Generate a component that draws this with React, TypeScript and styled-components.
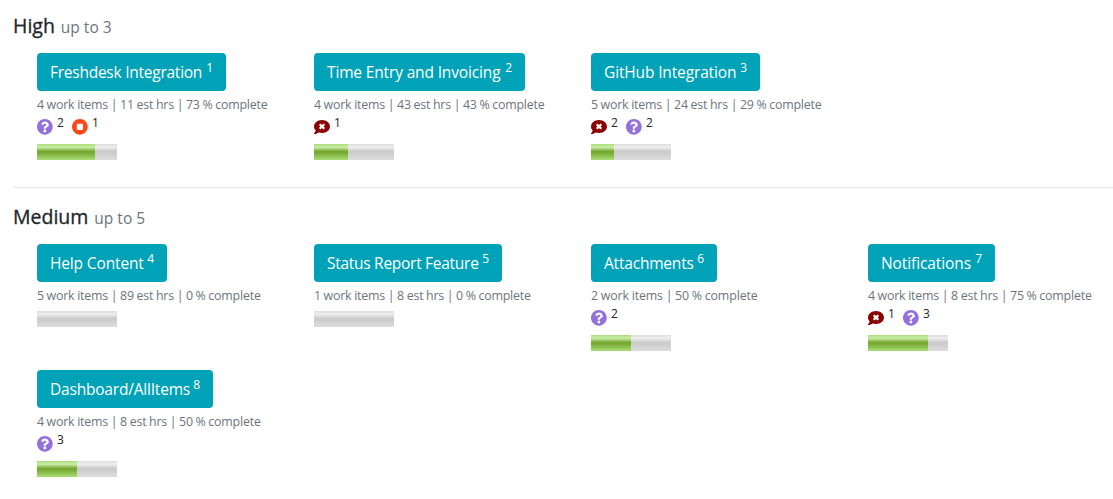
import React from "react";
import styled, { createGlobalStyle } from "styled-components";

const GlobalStyle = createGlobalStyle`
  *, *::before, *::after { box-sizing: border-box; }
  html { overflow: hidden; }
  body {
    margin: 0;
    background: #fff;
    color: #212529;
    font-family: "Open Sans", "Noto Sans", sans-serif;
    font-size: 15.5px;
    line-height: 24px;
  }
`;

const Page = styled.main`
  width: 1113px;
  height: 499px;
  padding: 14px 0 0 13px;
  overflow: hidden;
`;

const Section = styled.section`
  & + & {
    margin-top: 27px;
    padding-top: 17px;
    border-top: 1px solid #e5e5e5;
  }
`;

const Heading = styled.h5`
  display: flex;
  align-items: baseline;
  gap: 6px;
  height: 24px;
  margin: 0 0 15px;
  font-size: 19.5px;
  font-weight: 500;
  line-height: 24px;
  -webkit-text-stroke: 0.3px #212529;
`;

const Limit = styled.small`
  color: #6c757d;
  font-size: 15.5px;
  font-weight: 400;
  -webkit-text-stroke: 0;
`;

const Grid = styled.div`
  display: grid;
  grid-template-columns: repeat(4, 277px);
  row-gap: 19px;
  padding-left: 24px;
`;

const Card = styled.article`
  display: flex;
  flex-direction: column;
  align-items: flex-start;
  white-space: nowrap;
`;

const FeatureButton = styled.button<{ $width: number }>`
  display: flex;
  justify-content: space-between;
  width: ${(p) => p.$width}px;
  height: 38px;
  padding: 7px 13px;
  border: 0;
  border-radius: 4px;
  background: #00a2b8;
  color: #fff;
  font: inherit;
  line-height: 24px;
`;

const Label = styled.span<{ $tracking: number }>`
  letter-spacing: ${(p) => p.$tracking}px;
`;

const Rank = styled.span`
  font-size: 12px;
  line-height: 15px;
`;

const Summary = styled.div<{ $tracking: number }>`
  height: 24px;
  color: #6c757d;
  font-size: 12.4px;
  line-height: 28px;
  letter-spacing: ${(p) => p.$tracking}px;
  word-spacing: -0.3px;
`;

const Flags = styled.div`
  display: flex;
  gap: 8px;
  height: 24px;
`;

const Flag = styled.span`
  display: flex;
  gap: 4px;
  font-size: 12px;
  line-height: 15px;

  svg {
    display: block;
    width: 16px;
    height: 16px;
    margin-top: 4px;
  }
`;

const Meter = styled.div`
  width: 80px;
  height: 16px;
  margin-top: 5px;
  background: linear-gradient(#ddd, #eee 20%, #ccc 45%, #ccc 55%, #ddd);
`;

const MeterValue = styled.div`
  height: 100%;
  background: linear-gradient(#ad7, #cea 20%, #7a3 45%, #7a3 55%, #ad7);
`;

type FlagKind = "question" | "stopped" | "rejected";

const FlagIcon = ({ kind }: { kind: FlagKind }) => {
  if (kind === "question") {
    return (
      <svg viewBox="8 8 504 504" fill="#9370db">
        <path d="M504 256c0 137-111 248-248 248S8 393 8 256 119 8 256 8s248 111 248 248zM262.700 90c-54.500 0-89.300 23-116.500 63.800-3.500 5.300-2.400 12.400 2.700 16.300l34.700 26.300c5.200 3.900 12.600 3 16.700-2.100 17.900-22.700 30.100-35.800 57.300-35.800 20.400 0 45.700 13.100 45.700 33 0 15-12.400 22.700-32.500 34C247.100 238.500 216 254.900 216 296v4c0 6.600 5.400 12 12 12h56c6.600 0 12-5.400 12-12v-1.300c0-28.500 83.200-29.600 83.200-106.700 0-58-60.200-102-116.500-102zM256 338c-25.400 0-46 20.600-46 46s20.600 46 46 46 46-20.600 46-46-20.600-46-46-46z" />
      </svg>
    );
  }
  if (kind === "stopped") {
    return (
      <svg viewBox="8 8 504 504" fill="#ff4719">
        <path d="M256 8C119 8 8 119 8 256s111 248 248 248 248-111 248-248S393 8 256 8zm96 328c0 8.800-7.200 16-16 16H176c-8.800 0-16-7.200-16-16V176c0-8.800 7.200-16 16-16h160c8.800 0 16 7.200 16 16v160z" />
      </svg>
    );
  }
  return (
    <svg viewBox="0 0 16 16">
      <path
        d="M8 1C3.600 1 0 3.900 0 7.500c0 1.500.6 2.900 1.700 4-.3 1.100-.9 2-1.600 2.700-.3.300-.1.800.3.800 1.700 0 3.200-.7 4.300-1.500 1 .3 2.100.5 3.300.5 4.400 0 8-2.900 8-6.500S12.400 1 8 1z"
        fill="#8b0000"
      />
      <path d="M5.700 5.200l4.600 4.600M10.300 5.200l-4.600 4.600" stroke="#fff" strokeWidth="2.200" fill="none" />
    </svg>
  );
};

interface Feature {
  name: string;
  rank: number;
  width: number;
  tracking?: number;
  summary: string;
  summaryTracking?: number;
  flags?: [FlagKind, number][];
  filled: number;
}

const high: Feature[] = [
  { name: "Freshdesk Integration", rank: 1, width: 189, tracking: -0.25, summary: "4 work items | 11 est hrs | 73 % complete", flags: [["question", 2], ["stopped", 1]], filled: 73 },
  { name: "Time Entry and Invoicing", rank: 2, width: 211, tracking: -0.15, summary: "4 work items | 43 est hrs | 43 % complete", flags: [["rejected", 1]], filled: 43 },
  { name: "GitHub Integration", rank: 3, width: 169, tracking: -0.14, summary: "5 work items | 24 est hrs | 29 % complete", flags: [["rejected", 2], ["question", 2]], filled: 29 },
];

const medium: Feature[] = [
  { name: "Help Content", rank: 4, width: 130, tracking: -0.14, summary: "5 work items | 89 est hrs | 0 % complete", filled: 0 },
  { name: "Status Report Feature", rank: 5, width: 188, tracking: -0.28, summary: "1 work items | 8 est hrs | 0 % complete", filled: 0 },
  { name: "Attachments", rank: 6, width: 126, summary: "2 work items | 50 % complete", summaryTracking: -0.13, flags: [["question", 2]], filled: 50 },
  { name: "Notifications", rank: 7, width: 127, tracking: -0.1, summary: "4 work items | 8 est hrs | 75 % complete", flags: [["rejected", 1], ["question", 3]], filled: 75 },
  { name: "Dashboard/AllItems", rank: 8, width: 176, summary: "4 work items | 8 est hrs | 50 % complete", flags: [["question", 3]], filled: 50 },
];

const FeatureCard = ({ feature }: { feature: Feature }) => (
  <Card>
    <FeatureButton $width={feature.width}>
      <Label $tracking={feature.tracking ?? -0.2}>{feature.name}</Label>
      <Rank>{feature.rank}</Rank>
    </FeatureButton>
    <Summary $tracking={feature.summaryTracking ?? -0.2}>{feature.summary}</Summary>
    {feature.flags && (
      <Flags>
        {feature.flags.map(([kind, count]) => (
          <Flag key={kind}>
            <FlagIcon kind={kind} />
            {count}
          </Flag>
        ))}
      </Flags>
    )}
    <Meter>
      <MeterValue style={{ width: `${feature.filled}%` }} />
    </Meter>
  </Card>
);

const Priority = ({ title, limit, features }: { title: string; limit: number; features: Feature[] }) => (
  <Section>
    <Heading>
      {title} <Limit>up to {limit}</Limit>
    </Heading>
    <Grid>
      {features.map((f) => (
        <FeatureCard key={f.rank} feature={f} />
      ))}
    </Grid>
  </Section>
);

export default function App() {
  return (
    <>
      <GlobalStyle />
      <Page>
        <Priority title="High" limit={3} features={high} />
        <Priority title="Medium" limit={5} features={medium} />
      </Page>
    </>
  );
}
